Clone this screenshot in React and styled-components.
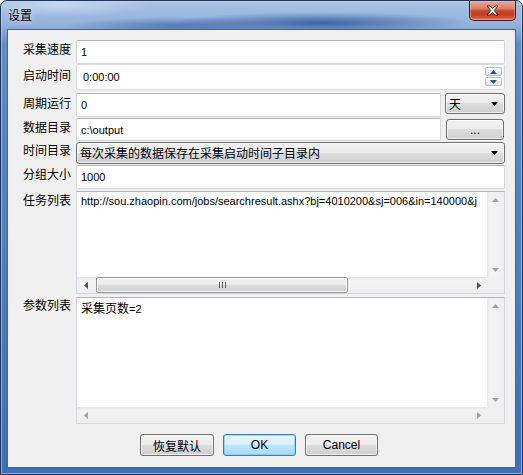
import React from 'react';
import styled, {createGlobalStyle, css} from 'styled-components';

const cjk = `"Noto Sans CJK SC", "Noto Sans", sans-serif`;
const latin = `"Liberation Sans", "Noto Sans CJK SC", sans-serif`;

const GlobalStyle = createGlobalStyle`
body {
  margin: 0;
  background: #fff;
}
* { box-sizing: border-box; }
`;

const Window = styled.div`
width: 523px;
height: 475px;
border: 1px solid #1d3358;
border-radius: 7px 7px 0 0;
padding: 0 6px 6px;
display: flex;
flex-direction: column;
box-shadow: inset 0 0 0 1px rgba(200,225,255,.55);
background:
  radial-gradient(ellipse 150px 11px at 320px 22px, rgba(38,80,150,.8), rgba(38,80,150,0)),
  radial-gradient(ellipse 110px 9px at 175px 25px, rgba(48,92,162,.65), rgba(48,92,162,0)),
  radial-gradient(ellipse 90px 12px at 60px 4px, rgba(210,225,245,.7), rgba(210,225,245,0)),
  linear-gradient(180deg, #aac2e2 0, #93b1da 24px, #5f8bc6 44px, #3f6fb4 100%);
`;

const TitleBar = styled.div`
height: 28px;
display: flex;
align-items: flex-start;
`;

const Title = styled.div`
font: 12px/14px ${cjk};
color: #000;
padding: 7px 0 0 1px;
text-shadow: 0 0 6px rgba(255,255,255,.9);
`;

const CloseButton = styled.div`
margin-left: auto;
width: 47px;
height: 20px;
border: 1px solid #4a1a12;
border-top: none;
border-radius: 0 0 5px 5px;
display: flex;
align-items: center;
justify-content: center;
box-shadow: inset 0 0 0 1px rgba(255,200,180,.45);
background: linear-gradient(180deg, #e9a897 0%, #d98069 40%, #c4452a 52%, #c23f22 75%, #d9745a 100%);
`;

const Client = styled.div`
flex: 1;
background: #f0f0f0;
border: 1px solid #4f6280;
padding: 10px 10px 0 0;
display: flex;
flex-direction: column;
`;

const Row = styled.div`
display: grid;
grid-template-columns: 68px 1fr;
align-items: start;
height: ${p => p.$h}px;
margin-top: ${p => p.$mt || 0}px;
`;

const Label = styled.div`
font: 12px/14px ${cjk};
color: #000;
text-align: right;
padding: ${p => p.$pt || 0}px 5px 0 0;
white-space: nowrap;
`;

const Line = styled.div`
display: flex;
align-items: flex-start;
height: 100%;
gap: ${p => p.$gap || 0}px;
`;

const TextBox = styled.div`
position: relative;
height: ${p => p.$h ? p.$h + 'px' : '100%'};
width: ${p => p.$w ? p.$w + 'px' : 'auto'};
flex: ${p => p.$w ? 'none' : 1};
background: #fff;
border: 1px solid #d5d7dc;
border-top-color: #b4b6bc;
border-radius: 2px;
display: flex;
align-items: center;
padding-left: ${p => p.$pl || 4}px;
font: 11px ${latin};
color: #000;
white-space: nowrap;
${p => p.$light && css`
border-color: #d9dadd;
`}
`;

const SpinGroup = styled.div`
position: absolute;
right: 2px;
top: 2px;
display: flex;
flex-direction: column;
gap: 1px;
`;

const SpinButton = styled.div`
width: 17px;
height: 9px;
border: 1px solid #b5bdc8;
border-radius: 2px;
background: linear-gradient(180deg, #fafbfc, #e6e9ee);
display: flex;
align-items: center;
justify-content: center;
`;

const buttonFace = css`
border: 1px solid #707070;
border-radius: 3px;
background: linear-gradient(180deg, #f2f2f2 0%, #ebebeb 49%, #dddddd 50%, #cfcfcf 100%);
box-shadow: inset 0 0 0 1px rgba(255,255,255,.7);
`;

const Combo = styled.div`
${buttonFace}
width: ${p => p.$w ? p.$w + 'px' : 'auto'};
flex: ${p => p.$w ? 'none' : 1};
height: ${p => p.$h}px;
display: flex;
align-items: center;
padding: 0 6px 0 3px;
font: 12px/16px ${cjk};
color: #000;
`;

const ComboText = styled.span`
flex: 1;
white-space: nowrap;
`;

const PushButton = styled.div`
${buttonFace}
width: ${p => p.$w}px;
height: ${p => p.$h || 22}px;
margin-top: ${p => p.$mt || 0}px;
display: flex;
align-items: center;
justify-content: center;
font: ${p => p.$cjk ? `12px ${cjk}` : `12px ${latin}`};
color: #000;
${p => p.$default && css`
border-color: #3c7fb1;
background: linear-gradient(180deg, #eaf6fd 0%, #d9f0fc 49%, #bee6fd 50%, #a7d9f5 100%);
box-shadow: inset 0 0 0 1px rgba(110,200,240,.6);
`}
`;

const ScrollArea = styled.div`
height: 100%;
background: #fff;
border: 1px solid #d5d7dc;
border-top-color: #b4b6bc;
display: grid;
grid-template-columns: 1fr 17px;
grid-template-rows: 1fr 16px;
`;

const Content = styled.div`
padding: 3px 4px;
white-space: nowrap;
font: 11px/13px ${latin};
color: #000;
`;

const ContentCjk = styled.span`
font: 12px/14px ${cjk};
`;

const VBar = styled.div`
background: linear-gradient(90deg, #e8e8e8 0, #f3f3f3 3px, #f0f0f0 100%);
display: flex;
flex-direction: column;
justify-content: space-between;
align-items: center;
padding: 6px 0 5px;
`;

const HBar = styled.div`
background: linear-gradient(180deg, #e6e6e6 0, #f2f2f2 3px, #efefef 100%);
display: flex;
align-items: stretch;
`;

const ArrowCell = styled.div`
width: 17px;
flex: none;
display: flex;
align-items: center;
justify-content: center;
`;

const Track = styled.div`
flex: 1;
display: flex;
align-items: stretch;
padding-left: 2px;
`;

const Thumb = styled.div`
width: ${p => p.$w}px;
border: 1px solid #979797;
border-radius: 2px;
background: linear-gradient(180deg, #f5f5f5 0%, #e9e9e9 45%, #d9d9d9 55%, #d2d2d2 100%);
box-shadow: inset 0 0 0 1px rgba(255,255,255,.8);
display: flex;
align-items: center;
justify-content: center;
gap: 2px;
`;

const Grip = styled.div`
width: 1px;
height: 6px;
background: #5a5a5a;
`;

const Corner = styled.div`
background: #f0f0f0;
`;

const ButtonBar = styled.div`
display: flex;
justify-content: center;
gap: 9px;
margin-top: 10px;
padding-left: 5px;
`;

function Tri({dir, color = '#4d4d4d'}) {
    const pts = {
        up: '0,4 3.5,0 7,4',
        down: '0,0 7,0 3.5,4',
        left: '4,0 4,7 0,3.5',
        right: '0,0 0,7 4,3.5',
    }[dir];
    const vertical = dir === 'up' || dir === 'down';
    return (
        <svg width={vertical ? 7 : 4} height={vertical ? 4 : 7} viewBox={vertical ? '0 0 7 4' : '0 0 4 7'}>
            <polygon points={pts} fill={color}/>
        </svg>
    );
}

function DropArrow() {
    return (
        <svg width="7" height="4" viewBox="0 0 7 4">
            <polygon points="0,0 7,0 3.5,4" fill="#000"/>
        </svg>
    );
}

function ScrollBox({children, thumb}) {
    const arrow = thumb ? '#505050' : '#a3a3a3';
    return (
        <ScrollArea>
            <Content>{children}</Content>
            <VBar>
                <Tri dir="up" color="#a3a3a3"/>
                <Tri dir="down" color="#a3a3a3"/>
            </VBar>
            <HBar>
                <ArrowCell><Tri dir="left" color={arrow}/></ArrowCell>
                <Track>
                    {thumb && (
                        <Thumb $w={thumb}>
                            <Grip/><Grip/><Grip/>
                        </Thumb>
                    )}
                </Track>
                <ArrowCell><Tri dir="right" color={arrow}/></ArrowCell>
            </HBar>
            <Corner/>
        </ScrollArea>
    );
}

export default function App() {
    return (
        <>
            <GlobalStyle/>
            <Window>
                <TitleBar>
                    <Title>设置</Title>
                    <CloseButton>
                        <svg width="13" height="11" viewBox="0 0 13 11">
                            <path d="M1 1h3l2.5 2.6L9 1h3L8.2 5.5 12 10H9L6.5 7.4 4 10H1l3.8-4.5z"
                                  fill="#fff" stroke="#3b1a14" strokeWidth="1" strokeLinejoin="round"/>
                        </svg>
                    </CloseButton>
                </TitleBar>
                <Client>
                    <Row $h={24}>
                        <Label $pt={2}>采集速度</Label>
                        <TextBox>1</TextBox>
                    </Row>
                    <Row $h={26}>
                        <Label $pt={4}>启动时间</Label>
                        <TextBox $light $pl={6}>
                            0:00:00
                            <SpinGroup>
                                <SpinButton><Tri dir="up" color="#2d4f94"/></SpinButton>
                                <SpinButton><Tri dir="down" color="#2d4f94"/></SpinButton>
                            </SpinGroup>
                        </TextBox>
                    </Row>
                    <Row $h={24} $mt={3}>
                        <Label $pt={3}>周期运行</Label>
                        <Line $gap={4}>
                            <TextBox $w={365}>0</TextBox>
                            <Combo $w={60} $h={21}>
                                <ComboText>天</ComboText>
                                <DropArrow/>
                            </Combo>
                        </Line>
                    </Row>
                    <Row $h={23} $mt={1}>
                        <Label $pt={2}>数据目录</Label>
                        <Line $gap={5}>
                            <TextBox $w={365}>c:\output</TextBox>
                            <PushButton $w={58} $h={21} $mt={1}>...</PushButton>
                        </Line>
                    </Row>
                    <Row $h={22} $mt={1}>
                        <Label $pt={1}>时间目录</Label>
                        <Line>
                            <Combo $h={22}>
                                <ComboText>每次采集的数据保存在采集启动时间子目录内</ComboText>
                                <DropArrow/>
                            </Combo>
                        </Line>
                    </Row>
                    <Row $h={24} $mt={1}>
                        <Label $pt={2}>分组大小</Label>
                        <TextBox>1000</TextBox>
                    </Row>
                    <Row $h={103} $mt={2}>
                        <Label $pt={2}>任务列表</Label>
                        <ScrollBox thumb={252}>
                            http://sou.zhaopin.com/jobs/searchresult.ashx?bj=4010200&amp;sj=006&amp;in=140000&amp;j
                        </ScrollBox>
                    </Row>
                    <Row $h={127} $mt={3}>
                        <Label $pt={1}>参数列表</Label>
                        <ScrollBox>
                            <ContentCjk>采集页数</ContentCjk>=2
                        </ScrollBox>
                    </Row>
                    <ButtonBar>
                        <PushButton $w={74} $cjk>恢复默认</PushButton>
                        <PushButton $w={73} $default>OK</PushButton>
                        <PushButton $w={73}>Cancel</PushButton>
                    </ButtonBar>
                </Client>
            </Window>
        </>
    );
}
